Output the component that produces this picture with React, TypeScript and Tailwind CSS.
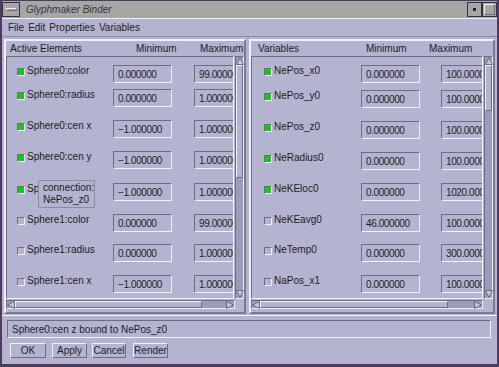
import React from 'react';

type Item = { on: boolean; name: string; min: string; max: string; mt: string; popup?: boolean };

const leftItems: Item[] = [
  { on: true, name: 'Sphere0:color', min: '0.000000', max: '99.000000', mt: 'mt-[8px]' },
  { on: true, name: 'Sphere0:radius', min: '0.000000', max: '1.000000', mt: 'mt-[6px]' },
  { on: true, name: 'Sphere0:cen x', min: '\u22121.000000', max: '1.000000', mt: 'mt-[13px]' },
  { on: true, name: 'Sphere0:cen y', min: '\u22121.000000', max: '1.000000', mt: 'mt-[13px]' },
  { on: true, name: 'Sphere0:cen z', min: '\u22121.000000', max: '1.000000', mt: 'mt-[14px]', popup: true },
  { on: false, name: 'Sphere1:color', min: '0.000000', max: '99.000000', mt: 'mt-[13px]' },
  { on: false, name: 'Sphere1:radius', min: '0.000000', max: '1.000000', mt: 'mt-[12px]' },
  { on: false, name: 'Sphere1:cen x', min: '\u22121.000000', max: '1.000000', mt: 'mt-[13px]' },
];

const rightItems: Item[] = [
  { on: true, name: 'NePos_x0', min: '0.000000', max: '100.000000', mt: 'mt-[8px]' },
  { on: true, name: 'NePos_y0', min: '0.000000', max: '100.000000', mt: 'mt-[7px]' },
  { on: true, name: 'NePos_z0', min: '0.000000', max: '100.000000', mt: 'mt-[13px]' },
  { on: true, name: 'NeRadius0', min: '0.000000', max: '100.000000', mt: 'mt-[13px]' },
  { on: true, name: 'NeKEloc0', min: '0.000000', max: '1020.000000', mt: 'mt-[13px]' },
  { on: false, name: 'NeKEavg0', min: '46.000000', max: '100.000000', mt: 'mt-[13px]' },
  { on: false, name: 'NeTemp0', min: '0.000000', max: '300.000000', mt: 'mt-[12px]' },
  { on: false, name: 'NaPos_x1', min: '0.000000', max: '100.000000', mt: 'mt-[13px]' },
];

const raised = 'border border-t-[#f0f0fa] border-l-[#f0f0fa] border-b-[#6c6c84] border-r-[#6c6c84]';
const sunken = 'border border-t-[#6c6c84] border-l-[#6c6c84] border-b-[#f0f0fa] border-r-[#f0f0fa]';

function Check({ on }: { on: boolean }) {
  return (
    <div
      className={`mt-[3px] h-[8px] w-[8px] shrink-0 ${sunken} ${on ? 'bg-[#1ec21e]' : 'bg-[#b4b4d0]'}`}
    />
  );
}

function Field({ v }: { v: string }) {
  return (
    <div className={`h-[18px] w-[59px] shrink-0 ${sunken} flex items-center pl-[4px] text-[10px] tracking-[-0.4px] whitespace-nowrap overflow-hidden`}>
      {v}
    </div>
  );
}

function Arrow({ dir }: { dir: 'up' | 'down' | 'left' | 'right' }) {
  const pts = {
    up: '4,0.5 7.5,7.5 0.5,7.5',
    down: '0.5,0.5 7.5,0.5 4,7.5',
    left: '0.5,4 7.5,0.5 7.5,7.5',
    right: '0.5,0.5 7.5,4 0.5,7.5',
  }[dir];
  return (
    <svg width="8" height="8" viewBox="0 0 8 8" className="shrink-0">
      <polygon points={pts} fill="#c4c4dc" stroke="#6c6c84" strokeWidth="1" />
    </svg>
  );
}

function VScroll({ thumb }: { thumb: string }) {
  return (
    <div className={`w-[9px] h-full ${sunken} bg-[#9c9cb8] flex flex-col items-center`}>
      <Arrow dir="up" />
      <div className={`w-[7px] ${thumb} ${raised} bg-[#b4b4d0]`} />
      <div className="flex-1" />
      <Arrow dir="down" />
    </div>
  );
}

function HScroll({ thumb }: { thumb: string }) {
  return (
    <div className={`h-[9px] ${sunken} bg-[#9c9cb8] flex items-center`}>
      <Arrow dir="left" />
      <div className={`h-[7px] ${thumb} ${raised} bg-[#b4b4d0]`} />
      <div className="flex-1" />
      <Arrow dir="right" />
    </div>
  );
}

function Rows({ items, side }: { items: Item[]; side: 'l' | 'r' }) {
  return (
    <div className="flex flex-col">
      {items.map((it) => (
        <div key={it.name} className={`relative flex items-start h-[18px] ${it.mt} ${side === 'l' ? 'pl-[10px]' : 'pl-[12px]'}`}>
          <Check on={it.on} />
          <div className={`shrink-0 pl-[2px] leading-[12px] text-[10px] whitespace-nowrap ${side === 'l' ? 'w-[88px]' : 'w-[89px]'}`}>
            <div className={it.popup ? 'w-[12px] overflow-hidden' : 'overflow-hidden'}>{it.name}</div>
          </div>
          <Field v={it.min} />
          <div className={side === 'l' ? 'w-[22px] shrink-0' : 'w-[21px] shrink-0'} />
          <Field v={it.max} />
          {it.popup && (
            <div className="absolute left-[31px] top-[-3px] w-[57px] h-[28px] border border-[#8a8aa2] bg-[#b4b4d0] pl-[4px] pt-[1px] text-[10px] leading-[12px]">
              <div>connection:</div>
              <div>NePos_z0</div>
            </div>
          )}
        </div>
      ))}
    </div>
  );
}

function Panel({ side, title, items }: { side: 'l' | 'r'; title: string; items: Item[] }) {
  const l = side === 'l';
  return (
    <div className={`${l ? 'w-[242px]' : 'w-[246px]'} h-[275px] border-2 border-t-[#f0f0fa] border-l-[#f0f0fa] border-b-[#7a7a92] border-r-[#7a7a92] flex flex-col`}>
      <div className="h-[15px] flex items-center text-[10px] whitespace-nowrap">
        <div className={l ? 'w-[130px] pl-[4px]' : 'w-[115px] pl-[7px]'}>{title}</div>
        <div className={l ? 'w-[64px]' : 'w-[63px]'}>Minimum</div>
        <div>Maximum</div>
      </div>
      <div className="h-[243px] flex gap-[1px]">
        <div className={`${l ? 'w-[229px]' : 'w-[232px]'} h-full ${sunken} overflow-hidden`}>
          <Rows items={items} side={side} />
        </div>
        <VScroll thumb={l ? 'h-[113px]' : 'h-[46px]'} />
      </div>
      <div className={`mt-[1px] ${l ? 'w-[229px]' : 'w-[232px]'}`}>
        <HScroll thumb={l ? 'w-[187px]' : 'w-[188px]'} />
      </div>
    </div>
  );
}

function Btn({ label, w }: { label: string; w: string }) {
  return (
    <div className={`${w} h-[15px] ${raised} flex items-center justify-center text-[10px] whitespace-nowrap`}>
      {label}
    </div>
  );
}

export default function App() {
  return (
    <div
      className="w-[499px] h-[367px] bg-[#4b3d5e] pt-[1px] px-[2px] pb-[3px] text-[#1c1c24] overflow-hidden"
      style={{ fontFamily: '"Liberation Sans", Arial, sans-serif' }}
    >
      <div className="h-full flex flex-col bg-[#b4b4d0]">
        {/* title bar */}
        <div className="h-[17px] bg-[#a6a6a2] flex items-center shrink-0">
          <div className="w-[18px] h-[15px] border border-[#3c3048] flex items-center justify-center">
            <div className={`w-[11px] h-[3px] ${raised}`} />
          </div>
          <div className="pl-[6px] italic text-[10px] text-[#34344a]">Glyphmaker Binder</div>
          <div className="flex-1" />
          <div className="w-[15px] h-[15px] border border-[#3c3048] flex items-center justify-center">
            <div className="w-[3px] h-[3px] bg-[#2a2236]" />
          </div>
          <div className="w-[15px] h-[15px] border border-[#3c3048] flex items-center justify-center">
            <div className={`w-[11px] h-[11px] ${raised}`} />
          </div>
        </div>

        {/* menu bar */}
        <div className="h-[18px] border-t border-[#f0f0fa] flex items-center gap-[4px] pl-[6px] text-[10px] shrink-0">
          <span>File</span>
          <span>Edit</span>
          <span>Properties</span>
          <span>Variables</span>
        </div>

        {/* panels */}
        <div className="flex gap-[3px] pl-[2px] pt-[2px] border-t border-[#8c8ca4]">
          <Panel side="l" title="Active Elements" items={leftItems} />
          <Panel side="r" title="Variables" items={rightItems} />
        </div>

        {/* status */}
        <div className="border-t border-[#f0f0fa] mt-[1px] pt-[4px] px-[5px]">
          <div className={`h-[18px] w-[484px] ${sunken} flex items-center pl-[4px] text-[10px]`}>
            Sphere0:cen z bound to NePos_z0
          </div>
        </div>

        {/* buttons */}
        <div className="flex pl-[8px] pt-[5px]">
          <Btn label="OK" w="w-[36px]" />
          <div className="w-[6px]" />
          <Btn label="Apply" w="w-[35px]" />
          <div className="w-[5px]" />
          <Btn label="Cancel" w="w-[34px]" />
          <div className="w-[7px]" />
          <Btn label="Render" w="w-[35px]" />
        </div>
      </div>
    </div>
  );
}
